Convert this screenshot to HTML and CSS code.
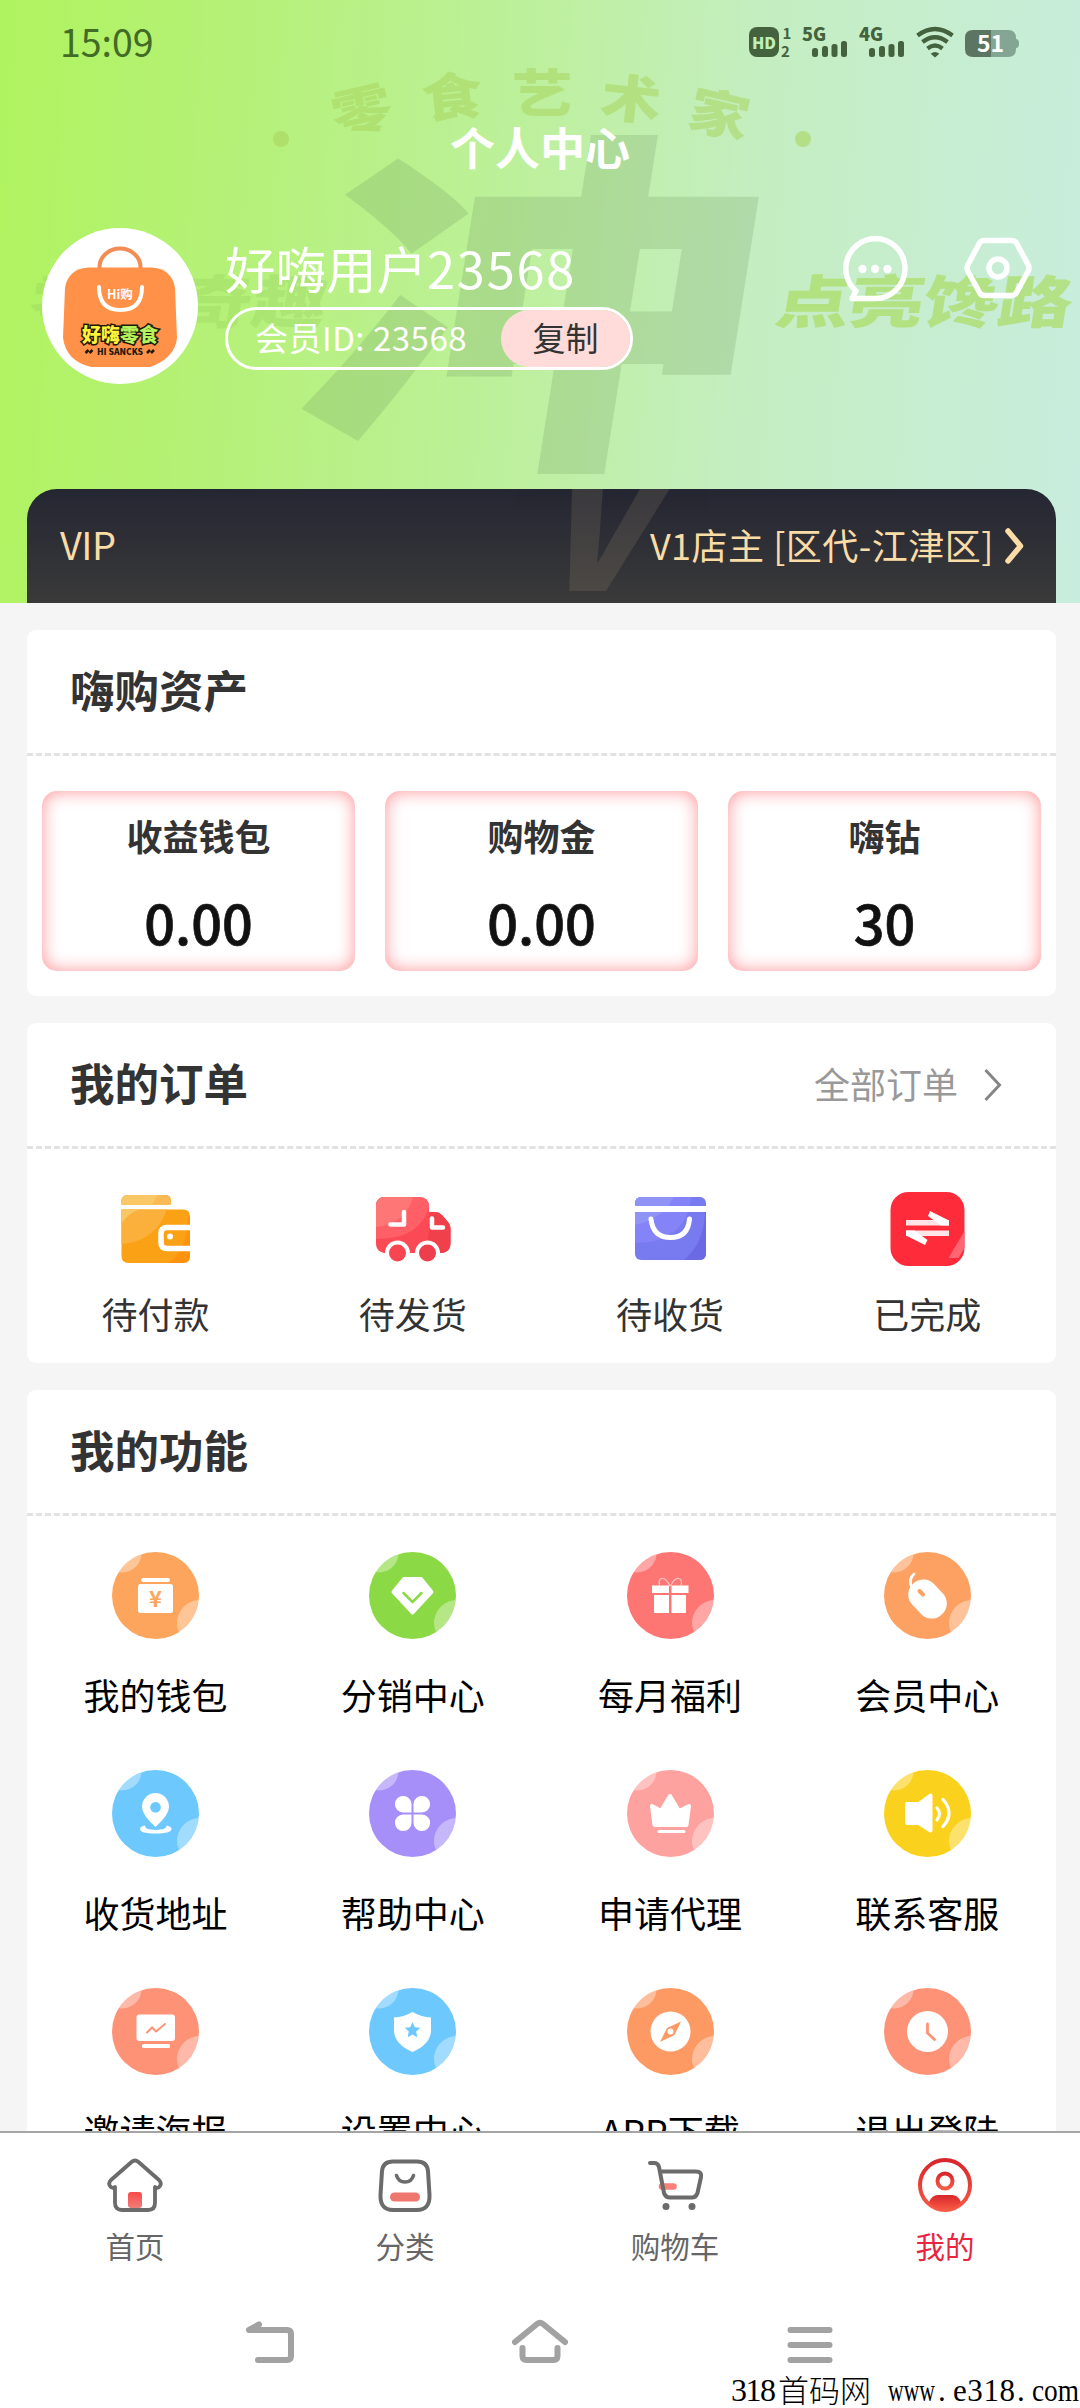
FILE: index.html
```html
<!DOCTYPE html>
<html lang="zh-CN">
<head>
<meta charset="utf-8">
<title>个人中心</title>
<link rel="stylesheet" href="styles.css">
</head>
<body>
<svg class="defs" aria-hidden="true">
  <defs>
    <clipPath id="disc"><circle cx="43.5" cy="43.5" r="43.5"/></clipPath>
    <g id="base">
      <circle cx="43.5" cy="43.5" r="43.5" fill="currentColor"/>
      <g clip-path="url(#disc)" fill="#fff" fill-opacity=".36"><circle cx="10" cy="1" r="19.5"/><circle cx="88" cy="71" r="23"/></g>
    </g>
    <linearGradient id="redfade" x1="0" y1="0" x2="0" y2="1"><stop offset="0" stop-color="#fb4a4a"/><stop offset="1" stop-color="#f07d78"/></linearGradient>
    <linearGradient id="mefade" x1="0" y1="0" x2="0" y2="1"><stop offset="0" stop-color="#d8262b"/><stop offset="1" stop-color="#f85a45"/></linearGradient>
  </defs>
</svg>
<div class="phone">
  <main class="scroll">
    <header class="hero">
      <svg class="hero-art" width="1080" height="603" viewBox="0 0 1080 603" aria-hidden="true">
        <g class="art-big"><text transform="translate(287 440) skewX(-9) scale(1.245 .975)" font-size="366">冲</text></g>
        <g class="art-small">
          <text transform="translate(362 111) rotate(-13) scale(1.12 .95)" y="19">零</text>
          <text transform="translate(452 98) rotate(-6) scale(1.12 .95)" y="19">食</text>
          <text transform="translate(542 94) scale(1.12 .95)" y="19">艺</text>
          <text transform="translate(631 100) rotate(6) scale(1.12 .95)" y="19">术</text>
          <text transform="translate(719 115) rotate(13) scale(1.12 .95)" y="19">家</text>
        </g>
        <g class="art-dots"><circle cx="281" cy="139" r="8"/><circle cx="803" cy="139" r="8"/></g>
        <text class="art-side dim" transform="translate(27 323) skewX(-9) scale(1.3 1)">零食奇趣</text>
        <text class="art-side" transform="translate(773 323) skewX(-9) scale(1.3 1)">点亮馋路</text>
      </svg>
      <div class="status">
        <span class="clock">15:09</span>
        <svg width="272" height="34" viewBox="0 0 272 34">
          <g fill="#45623f">
            <rect x="0" y="2" width="30" height="30" rx="8"/>
            <text x="33.500" y="14" font-size="15" font-weight="700">1</text>
            <text x="32" y="31.500" font-size="15" font-weight="700">2</text>
            <text x="53" y="16" font-size="18" font-weight="900">5G</text>
            <text x="110" y="16" font-size="18" font-weight="900">4G</text>
            <g id="bars"><rect x="63" y="23" width="6" height="9" rx="2.5"/><rect x="73" y="21" width="6" height="11" rx="2.5"/><rect x="82.500" y="19" width="6" height="13" rx="2.500"/><rect x="92" y="16" width="6" height="16" rx="2.500"/></g>
            <use href="#bars" x="57"/>
            <path d="M186 32.500l-4.300-3.800q4.300-3.500 8.600 0z"/>
          </g>
          <text x="15" y="23.500" text-anchor="middle" font-size="16" font-weight="900" fill="#bff0b8">HD</text>
          <g fill="none" stroke="#45623f" stroke-width="4.200"><path d="M168.500 10.500q17.500-13 35 0"/><path d="M173.500 17q12.500-9.500 25 0"/><path d="M178.500 23.500q7.500-6 15 0"/></g>
          <path d="M224 5h18v27h-18q-8 0-8-8V13q0-8 8-8z" fill="#5c7562"/>
          <path d="M242 5h17q8 0 8 8v1q3 0 3 4.500t-3 4.500v1q0 8-8 8h-17z" fill="#82a693"/>
          <text x="241.500" y="26.500" text-anchor="middle" font-size="23" font-weight="700" fill="#fff">51</text>
        </svg>
      </div>
      <h1>个人中心</h1>
      <section class="profile">
        <svg class="avatar" width="156" height="156" viewBox="0 0 156 156">
          <circle cx="78" cy="78" r="78" fill="#fff"/>
          <path d="M57.500 42v-3a20.500 18.500 0 0 1 41 0v3" fill="none" stroke="#f28c55" stroke-width="4"/>
          <path d="M46 39.500h64Q130 41 133 60l2 50q-2 20-27 29H49q-25-6-28-29l2-50Q26 41 46 39.500z" fill="#ff9149"/>
          <path d="M57 59q0 23 21.500 23T100 59" fill="none" stroke="#fff" stroke-width="4" stroke-linecap="round"/>
          <text x="78" y="71" text-anchor="middle" font-size="12.500" font-weight="700" fill="#fff">Hi购</text>
          <g font-size="19" font-weight="900" stroke="#20180c" stroke-width="3" paint-order="stroke"><text x="40" y="114" fill="#fff23a">好嗨</text><text x="78" y="114" fill="#b4f35b">零食</text></g>
          <text x="78" y="126.500" text-anchor="middle" font-size="8.500" font-weight="900" fill="#20180c" textLength="46">HI SANCKS</text>
          <path d="M43.500 125l3-3m1 3l3-3m54.500 3l3-3m1 3l3-3" stroke="#20180c" stroke-width="2.500"/>
        </svg>
        <div class="who">
          <div class="name">好嗨用户<span>23568</span></div>
          <div class="pill"><span class="uid">会员ID: 23568</span><button>复制</button></div>
        </div>
        <div class="tools">
          <svg width="66" height="68" viewBox="0 0 66 68" fill="none" stroke="#fff" stroke-width="5.500" stroke-linejoin="round">
            <path d="M33 4.500a29.500 29.500 0 1 1 0 60H10l4-7.500A30 30 0 0 1 33 4.500z"/>
            <g fill="#fff" stroke="none"><circle cx="20.500" cy="35" r="4.200"/><circle cx="33" cy="35" r="4.200"/><circle cx="45.500" cy="35" r="4.200"/></g>
          </svg>
          <svg width="68" height="68" viewBox="0 0 68 68" fill="none" stroke="#fff" stroke-width="5.500" stroke-linejoin="round">
            <path d="M20 6.500h28q3 0 4.500 2.500l12 22.500q1 2.500 0 5l-12 22Q51 61.500 48 61.500H20q-3 0-4.500-3l-12-22q-1-2.500 0-5L15.500 9q1.500-2.500 4.500-2.500z"/>
            <circle cx="34" cy="34" r="9"/>
          </svg>
        </div>
      </section>
      <section class="vip">
        <span class="ghost" aria-hidden="true">V</span>
        <span class="vip-name">VIP</span>
        <span class="vip-level">V1店主 [区代-江津区]</span>
        <svg width="20" height="36" viewBox="0 0 20 36"><path d="M3 3l12.500 15L3 33" fill="none" stroke="#fadca6" stroke-width="5.500" stroke-linecap="round" stroke-linejoin="round"/></svg>
      </section>
    </header>

    <section class="card assets">
      <div class="head"><h2>嗨购资产</h2></div>
      <div class="boxes">
        <div class="box"><b>收益钱包</b><strong>0.00</strong></div>
        <div class="box"><b>购物金</b><strong>0.00</strong></div>
        <div class="box"><b>嗨钻</b><strong>30</strong></div>
      </div>
    </section>

    <section class="card orders">
      <div class="head"><h2>我的订单</h2><a class="all"><span>全部订单</span><svg width="20" height="34" viewBox="0 0 20 34"><path d="M2.500 2l14 15-14 15" fill="none" stroke="#858585" stroke-width="3"/></svg></a></div>
      <div class="grid">
        <div class="order">
          <svg width="80" height="80" viewBox="0 0 80 80">
            <clipPath id="wc"><path d="M12 6h37q6 0 6 6v3.500H5.500V12q0-6 6.500-6zM5.500 20.500H67q7 0 7 7V67q0 7-7 7H12.500q-7 0-7-7z"/></clipPath>
            <g clip-path="url(#wc)"><path fill="#faa115" d="M0 0h80v80H0z"/><path fill="#ff930f" d="M80 28v60H30Q72 72 72 28z"/><path fill="#fbb03b" d="M0 0h55Q50 52 5 55H0z"/><path fill="#f9c766" d="M0 0h52q-5 14-12 20.500h-16Q12 24 5 35H0z"/><path fill="#f9ba55" d="M44 0h14v16H36z"/></g>
            <path d="M75 38.500H51q-6 0-6 6v9q0 6 6 6h24" fill="none" stroke="#fff" stroke-width="5.500"/>
            <circle cx="54" cy="47.500" r="3" fill="#fff"/>
          </svg>
          <span>待付款</span>
        </div>
        <div class="order">
          <svg width="80" height="80" viewBox="0 0 80 80">
            <clipPath id="tc"><path d="M12 8h34q10 0 10 10v5h6q4 0 7 3l6 7q2.500 3 2.500 6v16q0 7-8 9H11q-8-2-8-9V17q0-9 9-9z"/></clipPath>
            <g clip-path="url(#tc)"><path fill="#fb4956" d="M0 0h80v80H0z"/><path fill="#f0404c" d="M57 20h24v50H48q10-20 9-50z"/><path fill="#ff5f66" d="M0 0h58Q58 50 3 50z"/><path fill="#ff7676" d="M0 0h42Q36 35 3 38z"/></g>
            <circle cx="24.500" cy="64" r="12.500" fill="#fff"/><circle cx="54.500" cy="64" r="12.500" fill="#fff"/>
            <circle cx="24.500" cy="64" r="8.500" fill="#f94451"/><circle cx="54.500" cy="64" r="8.500" fill="#ee3e4e"/>
            <path d="M31 23v12.500H17.500M59 29.500v9h11" fill="none" stroke="#fff" stroke-width="4.500" stroke-linecap="round" stroke-linejoin="round"/>
          </svg>
          <span>待发货</span>
        </div>
        <div class="order">
          <svg width="80" height="80" viewBox="0 0 80 80">
            <clipPath id="bc"><rect x="5" y="8" width="71" height="63" rx="6"/></clipPath>
            <g clip-path="url(#bc)"><path fill="#787bf0" d="M0 0h80v80H0z"/><path fill="#6c69e5" d="M78 20v60H38Q75 65 75 20z"/><path fill="#8483f7" d="M0 0h62Q60 54 5 54z"/><path fill="#8f93f6" d="M0 0h48L38 18Q20 36 0 36z"/></g>
            <path fill="#fff" d="M4 17h73v6H4z"/>
            <path d="M21 30q2 18.500 19.500 18.500T59.500 30" fill="none" stroke="#fff" stroke-width="5" stroke-linecap="round"/>
          </svg>
          <span>待收货</span>
        </div>
        <div class="order">
          <svg width="80" height="80" viewBox="0 0 80 80">
            <rect x="3.500" y="3" width="74" height="74" rx="18" fill="#fe2c3b"/>
            <path d="M77.500 42v17l-6 10h-10z" fill="#ff6673"/>
            <path d="M19 31h43v5.500H19zM19 41.500h43V47H19z" fill="#ffe4e6"/>
            <path d="M43 22l19 9.500v5h-8L41 27zM19 41.500h8.500L40.500 51 38 56 19 46.500z" fill="#fff"/>
          </svg>
          <span>已完成</span>
        </div>
      </div>
    </section>

    <section class="card funcs">
      <div class="head"><h2>我的功能</h2></div>
      <div class="grid">
        <div class="func c1"><svg viewBox="0 0 87 87"><use href="#base"/><rect x="29" y="26" width="29" height="4" rx="2" fill="#fff"/><rect x="26" y="32" width="35" height="29" rx="2.500" fill="#fff"/><text x="43.500" y="54.500" text-anchor="middle" font-size="22" font-weight="700" fill="currentColor">¥</text></svg><span>我的钱包</span></div>
        <div class="func c2"><svg viewBox="0 0 87 87"><use href="#base"/><path d="M35 27h17l10.500 13-19 20.500L24.500 40z" fill="#fff" stroke="#fff" stroke-width="4" stroke-linejoin="round"/><path d="M34.500 41l9 9 9-9" fill="none" stroke="currentColor" stroke-width="2.500" stroke-linecap="round"/></svg><span>分销中心</span></div>
        <div class="func c3"><svg viewBox="0 0 87 87"><use href="#base"/><path d="M25 33.500h17V41H25zM44.500 33.500h17V41h-17zM27 43h15v18H27zM44.500 43H59v18H44.500z" fill="#fff"/><path d="M43 34q-4-8-8-7.500t-2.500 7M43.500 34q4-8 8-7.500t2.500 7" fill="none" stroke="#fff" stroke-opacity=".6" stroke-width="1.200"/></svg><span>每月福利</span></div>
        <div class="func c4"><svg viewBox="0 0 87 87"><use href="#base"/><rect x="28.500" y="26" width="30" height="42" rx="14.500" transform="rotate(-43 43.500 47)" fill="#fff"/><path d="M30 22q-6 5-2 14" fill="none" stroke="#fff" stroke-width="2.800" stroke-linecap="round"/><path d="M35.500 39l3.500 3.500" stroke="currentColor" stroke-width="4" stroke-linecap="round"/></svg><span>会员中心</span></div>
        <div class="func c5"><svg viewBox="0 0 87 87"><use href="#base"/><path d="M33 55.500q-5 1-5 3.500 0 4.500 15.500 4.500T59.500 59q0-2.500-5-3.500 1 4-11 4.500-11.500-.5-10.500-4.500z" fill="#fff"/><path fill-rule="evenodd" d="M43.500 57q-13.500-12-13.500-20a13.500 14 0 0 1 27 0q0 8-13.500 20zm0-25a5.300 5.300 0 1 0 .01 0z" fill="#fff"/></svg><span>收货地址</span></div>
        <div class="func c6"><svg viewBox="0 0 87 87"><use href="#base"/><path d="M42.500 42.500H34a8.300 8.300 0 1 1 8.500-8.500zM44.500 42.500V34a8.300 8.300 0 1 1 8.500 8.500zM42.500 44.500V53a8.300 8.300 0 1 1-8.500-8.500zM44.500 44.500H53a8.300 8.300 0 1 1-8.500 8.500z" fill="#fff"/></svg><span>帮助中心</span></div>
        <div class="func c7"><svg viewBox="0 0 87 87"><use href="#base"/><path d="M25 36l9 5 9-15 9 15 10-5-2.500 19h-32z" fill="#fff" stroke="#fff" stroke-width="4" stroke-linejoin="round"/><path d="M32 61.500h25" stroke="#fff" stroke-width="3" stroke-linecap="round"/></svg><span>申请代理</span></div>
        <div class="func c8"><svg viewBox="0 0 87 87"><use href="#base"/><path d="M23 34h12l11.500-8.500v35L35 53H23z" fill="#fff" stroke="#fff" stroke-width="4" stroke-linejoin="round"/><path d="M53 38q5 5.500 0 12M59 29.500q12 13.500 0 27" fill="none" stroke="#fff" stroke-width="3.200" stroke-linecap="round"/></svg><span>联系客服</span></div>
        <div class="func c9"><svg viewBox="0 0 87 87"><use href="#base"/><rect x="24.500" y="26.500" width="38.500" height="26.500" rx="3" fill="#fff"/><rect x="30" y="56" width="28" height="4" rx="1.500" fill="#fff"/><path d="M35 44.500l5-5 4 4 9-7.500" fill="none" stroke="currentColor" stroke-width="2" stroke-linecap="round"/></svg><span>邀请海报</span></div>
        <div class="func c5"><svg viewBox="0 0 87 87"><use href="#base"/><path d="M43.500 24q9 5 18.500 5.500V42q0 14-18.500 22Q25 56 25 42V29.500Q34.500 29 43.500 24z" fill="#fff"/><path d="M43.500 34l2.300 5.200 5.500.6-4.100 3.800 1.100 5.600-4.800-2.800-4.800 2.800 1.100-5.600-4.100-3.800 5.500-.6z" fill="currentColor"/></svg><span>设置中心</span></div>
        <div class="func c10"><svg viewBox="0 0 87 87"><use href="#base"/><circle cx="43.500" cy="43.500" r="20" fill="#fff"/><path d="M54 33.500l-6.500 13.500-14.500 7 7-14z" fill="currentColor"/><circle cx="43.500" cy="43.500" r="3" fill="#fff"/></svg><span>APP下载</span></div>
        <div class="func c9"><svg viewBox="0 0 87 87"><use href="#base"/><circle cx="43.500" cy="43.500" r="20.500" fill="#fff"/><path d="M43.500 36v9l7 6.500" fill="none" stroke="currentColor" stroke-width="2.800" stroke-linecap="round"/></svg><span>退出登陆</span></div>
      </div>
    </section>
  </main>

  <nav class="tabs">
    <a><svg viewBox="0 0 60 60"><rect x="23" y="34" width="14" height="16" rx="3" fill="url(#redfade)"/><path d="M26.500 4q3.500-3 7 0L54 22q3 3 1 6t-5 1v16q0 7-7 7H17q-7 0-7-7V29q-3 2-5-1t1-6z" fill="none" stroke="#6b6b6b" stroke-width="3.800" stroke-linejoin="round"/></svg>首页</a>
    <a><svg viewBox="0 0 60 60"><path d="M18 3.500h24q10 0 11 9.500l1.500 24q.5 15-12.500 15H18q-13 0-12.500-15L7 13q1-9.500 11-9.500z" fill="none" stroke="#6b6b6b" stroke-width="4"/><path d="M21.500 17.500q2 6.500 8.500 6.500t8.500-6.500" fill="none" stroke="#6b6b6b" stroke-width="3.500" stroke-linecap="round"/><rect x="15" y="34.500" width="30" height="9" rx="4.500" fill="#f0776f"/></svg>分类</a>
    <a><svg viewBox="0 0 60 60"><path d="M17 28.500h11.500" stroke="#fa8078" stroke-width="6.500" stroke-linecap="round"/><path d="M5 5h4q4 0 5 4l5 26q1.500 4.500 6 4.500h22q4 0 5.500-4.500l3.500-16q1-5.500-5-5.500H15" fill="none" stroke="#6b6b6b" stroke-width="4" stroke-linecap="round"/><circle cx="21" cy="48.500" r="3.500" fill="#6b6b6b"/><circle cx="47" cy="48.500" r="3.500" fill="#6b6b6b"/></svg>购物车</a>
    <a class="on"><svg viewBox="0 0 60 60"><circle cx="30" cy="27" r="25" fill="none" stroke="url(#mefade)" stroke-width="4"/><circle cx="30" cy="23" r="7.500" fill="none" stroke="url(#mefade)" stroke-width="4"/><path d="M14 44q3-7 9-7h14q6 0 9 7-6 8-16 8t-16-8z" fill="url(#mefade)"/></svg>我的</a>
  </nav>
  <div class="sysnav">
    <svg viewBox="0 0 60 50" fill="none" stroke="#a2a2a2" stroke-width="6" stroke-linecap="round" stroke-linejoin="round"><path d="M19 6.500L9 12h38q4 0 4 4v22q0 4-4 4H18"/></svg>
    <svg viewBox="0 0 60 50" fill="none" stroke="#a2a2a2" stroke-width="6" stroke-linecap="round"><path d="M5 24L27 6q3-2.500 6 0l22 18M12.500 30v8q0 4 4 4h27q4 0 4-4v-8"/></svg>
    <svg viewBox="0 0 60 50" fill="none" stroke="#a2a2a2" stroke-width="6" stroke-linecap="round"><path d="M10.500 12h39M10.500 27h39M10.500 42h39"/></svg>
  </div>
  <svg class="site" width="350" height="36" viewBox="0 0 350 36">
    <text x="1" y="29" textLength="45">318</text>
    <text class="han" x="48" y="30">首码网</text>
    <g font-size="31"><text x="158" y="29" textLength="47" lengthAdjust="spacingAndGlyphs">www</text><text x="208" y="29">.</text><text x="223" y="29" textLength="62">e318</text><text x="287" y="29">.</text><text x="302" y="29" textLength="47" lengthAdjust="spacingAndGlyphs">com</text></g>
  </svg>
</div>
</body>
</html>
```
FILE: styles.css
```css
* { box-sizing: border-box; }
body {
  margin: 0;
  font-family: "Noto Sans CJK SC", sans-serif;
  color: #333;
}
h1, h2 { margin: 0; }
svg { display: block; flex: none; }
.defs { position: absolute; width: 0; height: 0; }

.phone {
  position: relative;
  width: 1080px;
  height: 2408px;
  display: flex;
  flex-direction: column;
  overflow: hidden;
  background: #fff;
}
.scroll {
  height: 2131px;
  flex: none;
  overflow: hidden;
  background: #f5f5f5;
}

/* header */
.hero {
  position: relative;
  height: 603px;
  padding: 0 24px 0 27px;
  background: linear-gradient(94deg, #b0f35f 0%, #b5f178 22%, #bdf09b 47%, #c4eec0 68%, #c8edde 100%);
  display: flex;
  flex-direction: column;
}
.hero-art { position: absolute; left: 0; top: 0; }
.art-big { fill: #6f9a5f; fill-opacity: .24; font-weight: 900; }
.art-small { font-size: 54px; font-weight: 900; fill: #a8d65f; fill-opacity: .55; text-anchor: middle; }
.art-dots { fill: #a8d65f; fill-opacity: .6; }
.art-side { font-size: 57px; font-weight: 900; fill: #a8dc5e; fill-opacity: .68; }
.art-side.dim { fill: #98d05f; fill-opacity: .35; }

.status, h1, .profile, .vip { position: relative; }
.status {
  height: 84px;
  padding: 0 33px;
  display: flex;
  justify-content: space-between;
  align-items: center;
}
.status svg { margin-right: 2px; }
.clock { margin-top: -4px; font-size: 37.500px; color: #426b25; }
h1 {
  margin-left: -3px;
  height: 130px;
  line-height: 126px;
  text-align: center;
  font-size: 45px;
  font-weight: 700;
  color: #fff;
}
.profile {
  height: 275px;
  padding: 14px 24px 0 15px;
  display: flex;
  align-items: flex-start;
}
.who { margin: 3px 0 0 27px; width: 408px; color: #fff; }
.name { font-size: 50.5px; line-height: 73px; height: 76px; font-weight: 400; white-space: nowrap; }
.name span { letter-spacing: 1.8px; }
.pill {
  height: 63px;
  border: 3px solid #fff;
  border-radius: 32px;
  display: flex;
  justify-content: space-between;
}
.uid { padding-left: 27px; font-size: 33px; line-height: 55px; letter-spacing: .5px; white-space: nowrap; }
.pill button {
  width: 129px;
  border: 0;
  border-radius: 29px;
  background: #ffdcd9;
  color: #333;
  font: 33px/55px "Noto Sans CJK SC", sans-serif;
  padding: 0 0 2px;
}
.tools { margin: 6px 0 0 auto; display: flex; gap: 56px; }

.vip {
  height: 114px;
  width: 1029px;
  padding: 0 31px 0 33px;
  display: flex;
  align-items: center;
  border-radius: 30px 30px 0 0;
  background: linear-gradient(#242632, #3a3a3a);
  color: #fadca6;
  overflow: hidden;
}
.ghost {
  position: absolute;
  left: 530px;
  top: -107px;
  font-size: 170px;
  line-height: 270px;
  font-weight: 800;
  transform: skewX(-18deg);
  opacity: .1;
}
.vip-name { margin-top: -5px; font-size: 38px; letter-spacing: -.5px; }
.vip-level { margin: -5px 11px 0 auto; font-size: 36px; letter-spacing: .5px; }

/* cards */
.card {
  margin: 27px 24px 0 27px;
  background: #fff;
  border-radius: 9px;
}
.head {
  height: 126px;
  padding: 0 53px 0 43px;
  border-bottom: 3px dashed #e2e2e2;
  display: flex;
  align-items: center;
  justify-content: space-between;
}
h2 { margin-top: -5px; font-size: 44.5px; font-weight: 700; line-height: 60px; }
.all { display: flex; align-items: center; gap: 25px; color: #999; font-size: 36px; }
.all span { margin-top: -4px; }

.assets { height: 366px; }
.boxes { padding: 35px 15px 0; display: grid; grid-template-columns: repeat(3, 1fr); gap: 30px; }
.box {
  height: 180px;
  border-radius: 15px;
  box-shadow: inset 0 0 18px #ff9498;
  display: flex;
  flex-direction: column;
  align-items: center;
}
.box b { margin-top: 18px; font-size: 36px; line-height: 52px; font-weight: 600; }
.box strong { margin-top: 24px; font-size: 54px; line-height: 74px; font-weight: 500; color: #111; -webkit-text-stroke: .7px #111; }

.orders { height: 340px; }
.grid { display: grid; grid-template-columns: repeat(4, 1fr); }
.order { padding-top: 40px; display: flex; flex-direction: column; align-items: center; }
.order span { margin-top: 18px; font-size: 36px; line-height: 52px; }

.funcs { height: 820px; }
.funcs .grid { padding-top: 36px; grid-auto-rows: 218px; }
.func { display: flex; flex-direction: column; align-items: center; }
.func svg { width: 87px; height: 87px; }
.func span { margin-top: 29px; font-size: 36px; line-height: 52px; color: #000; }
.c1 { color: #fda55d; }
.c2 { color: #8bd944; }
.c3 { color: #fe7674; }
.c4 { color: #fda163; }
.c5 { color: #6dc8fe; }
.c6 { color: #a78ff9; }
.c7 { color: #fea29f; }
.c8 { color: #fad11c; }
.c9 { color: #fe9277; }
.c10 { color: #fd9a63; }

/* bottom bars */
.tabs {
  height: 159px;
  flex: none;
  border-top: 2px solid #a5a5a5;
  display: grid;
  grid-template-columns: repeat(4, 1fr);
}
.tabs a {
  padding-top: 25px;
  display: flex;
  flex-direction: column;
  align-items: center;
  font-size: 29.500px;
  line-height: 42px;
  color: #666;
}
.tabs svg { width: 60px; height: 60px; margin-bottom: 6px; }
.tabs .on { color: #e9253f; }
.sysnav {
  height: 118px;
  padding: 28px 135px 0;
  display: grid;
  grid-template-columns: repeat(3, 1fr);
  justify-items: center;
}
.sysnav svg { width: 60px; height: 50px; }
.site {
  position: absolute;
  right: 0;
  bottom: 0;
  font-family: "Liberation Serif", serif;
  font-size: 32px;
  fill: #000;
}
.site .han { font-family: "Noto Sans CJK SC", sans-serif; font-size: 31px; font-weight: 300; }
```
